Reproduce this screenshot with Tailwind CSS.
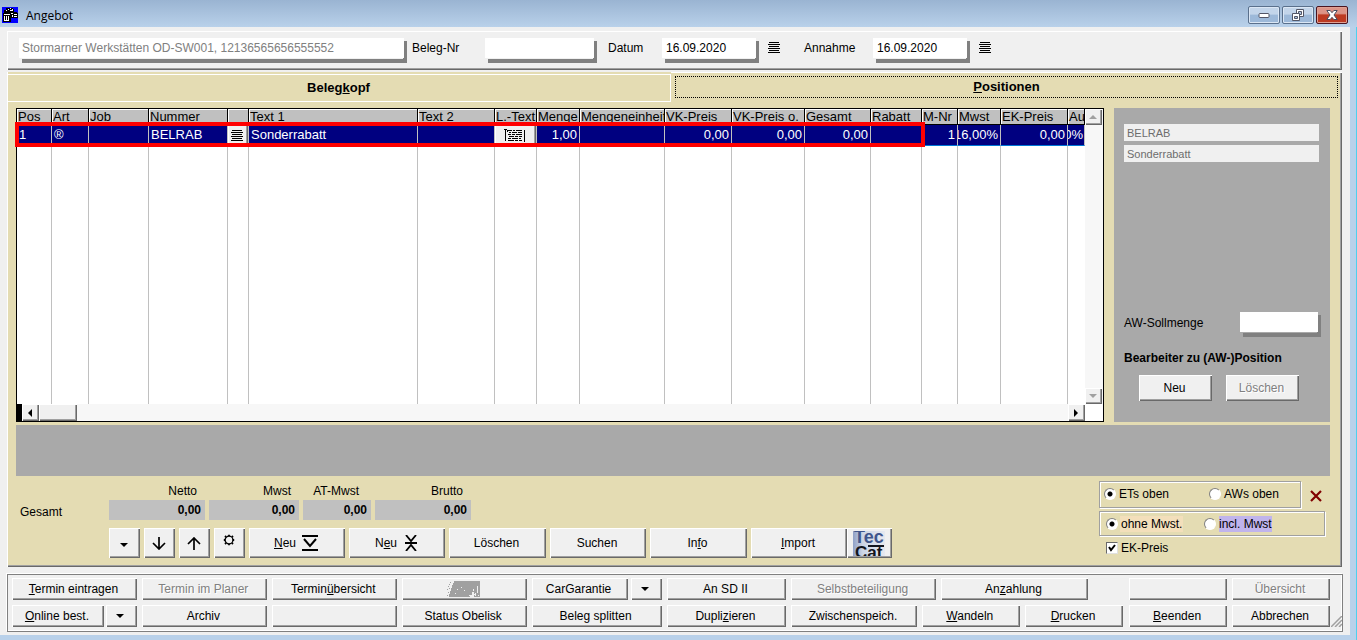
<!DOCTYPE html>
<html lang="de">
<head>
<meta charset="utf-8">
<title>Angebot</title>
<script src="https://cdn.jsdelivr.net/npm/@tailwindcss/browser@4"></script>
</head>
<body class="h-screen min-h-[600px] flex flex-col bg-[#f0f0f0] text-black text-[12px] leading-4 font-['Liberation_Sans',Arial,sans-serif] overflow-hidden [&_button]:flex [&_button]:items-center [&_button]:justify-center [&_button]:whitespace-nowrap [&_button]:min-w-0 [&_main_button]:bg-[#f0f0f0] [&_main_button]:shadow-[inset_1px_1px_0_#fff,inset_-1px_-1px_0_#696969,inset_-2px_-2px_0_#a0a0a0] [&_main_button]:pr-[2px] [&_button:disabled]:text-[#808080] [&_button:disabled]:[text-shadow:1px_1px_0_#fff]">

<header class="h-[27px] shrink-0 flex items-center pl-[2px] pr-[9px] bg-linear-to-b from-[#9ab4d2] to-[#b9d1ea]">
  <svg class="w-4 h-4 mt-[3px]" viewBox="0 0 16 16" shape-rendering="crispEdges"><path fill="#00f" d="M0 0h16v16H0z"/><path fill="#000" d="M4 1h7v1h1v3h3v1h1v5H9v4H1V6h1V3h2z"/><path fill="#fff" d="M4 3h1v1H4zM6 2h1v1H6zM8 1h1v1H8zM10 2h1v1h-1zM8 3h3v1H8zM2 7h6v1H2zM2 9h1v4H2zM4 9h1v4H4zM6 9h1v4H6zM2 13h5v1H2zM9 6h2v1H9zM10 8h1v2h-1zM12 7h3v1h-3zM12 9h3v1h-3z"/></svg>
  <h1 class="ml-2 mt-[5px] flex-1 font-['Open_Sans','Noto_Sans',sans-serif] text-[12px] leading-4">Angebot</h1>
  <div class="flex gap-[2px] mt-[2px]">
    <button aria-label="Minimieren" class="w-8 h-[18px] rounded-[2px] border border-[#5a708c] bg-linear-to-b from-[#c3d5ea] from-45% to-[#9db9d9] to-50% shadow-[inset_0_0_0_1px_#dbe7f5]"><svg class="w-3 h-3" viewBox="0 0 12 12"><rect x="1" y="4.500" width="10" height="4" rx="1" fill="#fff" stroke="#535666"/></svg></button>
    <button aria-label="Wiederherstellen" class="w-8 h-[18px] rounded-[2px] border border-[#5a708c] bg-linear-to-b from-[#c3d5ea] from-45% to-[#9db9d9] to-50% shadow-[inset_0_0_0_1px_#dbe7f5]"><svg class="w-3 h-3" viewBox="0 0 12 12" fill="#fff" stroke="#535666"><path d="M4.500.5h7v7h-7z"/><path fill="#a9c2df" d="M6.500 2.500h3v3h-3z"/><path d="M.5 4.500h7v7h-7z"/><path fill="#a9c2df" d="M2.500 7.500h3v2h-3z"/></svg></button>
    <button aria-label="Schließen" class="w-8 h-[18px] rounded-[2px] border border-[#4a1420] bg-linear-to-b from-[#dc9488] from-40% to-[#bc3a22] to-50% shadow-[inset_0_0_0_1px_#e0a193]"><svg class="w-3 h-3" viewBox="0 0 12 12"><path fill="#fff" stroke="#4b4e60" d="M.8 1.500h3.400L6 3.700l1.800-2.200h3.400L8 6l3.200 4.500H7.800L6 8.300l-1.800 2.200H.8L4 6z"/></svg></button>
  </div>
</header>

<div class="flex-1 min-h-0 flex border-r border-[#4fd0ee]">
<main class="flex-1 min-w-0 flex flex-col pl-[7px] pr-2 pt-1 pb-[3px] border-r-[6px] border-b-[5px] border-[#b9d1ea]">

  <section class="h-[39px] shrink-0 flex items-start pt-[6px] pl-[11px] border-t border-l border-t-white border-l-white shadow-[inset_-1px_-1px_0_#696969,inset_-2px_-2px_0_#a0a0a0]">
    <input aria-label="Kunde" disabled value="Stormarner Werkstätten OD-SW001, 12136565656555552" class="w-[385px] h-[22px] px-[3px] bg-white bg-clip-padding border-b-2 border-transparent text-[#808080] shadow-[3px_3px_0_#808080]">
    <label for="beleg" class="ml-2 mt-[2px] w-[73px]">Beleg-Nr</label>
    <input id="beleg" class="w-[109px] h-[22px] px-[3px] bg-white bg-clip-padding border-b-2 border-transparent shadow-[3px_3px_0_#808080]">
    <label for="datum" class="ml-[14px] mt-[2px] w-[54px]">Datum</label>
    <input id="datum" value="16.09.2020" class="w-[94px] h-[22px] px-1 bg-white bg-clip-padding border-b-2 border-transparent shadow-[3px_3px_0_#808080]">
    <svg class="ml-3 mt-1 w-3 h-[11px]" viewBox="0 0 12 11" shape-rendering="crispEdges"><path d="M1 0h10v1H1zM0 2h12v1H0zM1 4h10v1H1zM0 6h12v1H0zM1 8h10v1H1zM0 10h12v1H0z"/></svg>
    <label for="annahme" class="ml-6 mt-[2px] w-[69px]">Annahme</label>
    <input id="annahme" value="16.09.2020" class="w-[94px] h-[22px] px-1 bg-white bg-clip-padding border-b-2 border-transparent shadow-[3px_3px_0_#808080]">
    <svg class="ml-3 mt-1 w-3 h-[11px]" viewBox="0 0 12 11" shape-rendering="crispEdges"><path d="M1 0h10v1H1zM0 2h12v1H0zM1 4h10v1H1zM0 6h12v1H0zM1 8h10v1H1zM0 10h12v1H0z"/></svg>
  </section>

  <section class="mt-[2px] flex-1 min-h-0 flex flex-col bg-[#e4dcb3] shadow-[inset_1px_0_0_#fff,inset_-1px_-1px_0_#696969,inset_-2px_-2px_0_#a0a0a0]">
    <nav class="flex h-[30px] shrink-0 text-[13px] font-bold">
      <a href="#belegkopf" class="flex-1 mt-[2px] flex items-center justify-center border-y border-r border-white">Beleg<u>k</u>opf</a>
      <a href="#positionen" class="flex-1 pl-1 pr-1 pt-[3px] pb-1 border-t border-white flex"><span class="flex-1 flex items-center justify-center border border-dotted border-black"><u>P</u>ositionen</span></a>
    </nav>

    <div class="flex-1 min-h-0 flex flex-col pt-[6px] pl-[9px] pr-3">
      <div class="flex-1 min-h-0 flex gap-[10px]">
        <div class="relative flex-1 min-w-0 flex flex-col border border-black bg-white">
          <div class="flex-1 min-h-0 flex">
            <div class="flex-1 min-w-0 h-full overflow-hidden">
              <table class="table-fixed w-full h-full border-separate border-spacing-0 text-[13px] [&_th]:h-4 [&_th]:p-0 [&_th]:pl-[1px] [&_th]:text-left [&_th]:font-normal [&_th]:whitespace-nowrap [&_th]:overflow-hidden [&_th]:bg-[#c0c0c0] [&_th]:border-r [&_th]:border-b [&_th]:border-black [&_th]:shadow-[inset_1px_1px_0_#fff] [&_th]:leading-[15px] [&_td]:p-0 [&_td]:border-r [&_td]:border-[#c0c0c0] [&_td]:overflow-hidden [&_td]:whitespace-nowrap">
                <colgroup><col class="w-[35px]"><col class="w-[37px]"><col class="w-[60px]"><col class="w-[79px]"><col class="w-[21px]"><col><col class="w-[77px]"><col class="w-[42px]"><col class="w-[43px]"><col class="w-[85px]"><col class="w-[67px]"><col class="w-[73px]"><col class="w-[66px]"><col class="w-[51px]"><col class="w-[36px]"><col class="w-[43px]"><col class="w-[67px]"><col class="w-[17px]"></colgroup>
                <thead><tr><th>Pos</th><th>Art</th><th>Job</th><th>Nummer</th><th></th><th>Text 1</th><th>Text 2</th><th>L.-Text</th><th>Menge</th><th>Mengeneinheit</th><th>VK-Preis</th><th>VK-Preis o.</th><th>Gesamt</th><th>Rabatt</th><th>M-Nr</th><th>Mwst</th><th>EK-Preis</th><th>Au</th></tr></thead>
                <tbody>
                  <tr class="bg-[#000080] text-white [&>td]:h-[21px] [&>td]:border-b [&>td]:border-b-[#0078d7]">
                    <td class="pl-[2px]!">1</td><td class="pl-[2px]!">®</td><td></td><td class="pl-[2px]!">BELRAB</td>
                    <td><button aria-label="Nummer wählen" class="w-full h-5"><svg class="w-3 h-[11px]" viewBox="0 0 12 11" shape-rendering="crispEdges"><path d="M1 0h10v1H1zM0 2h12v1H0zM1 4h10v1H1zM0 6h12v1H0zM1 8h10v1H1zM0 10h12v1H0z"/></svg></button></td>
                    <td class="pl-[2px]!">Sonderrabatt</td><td></td>
                    <td><button aria-label="Langtext" class="w-full h-5"><svg class="w-[22px] h-[14px]" viewBox="0 0 22 14" shape-rendering="crispEdges"><path d="M0 1h3v1H0zM1 2h1v11H1zM3 2h1v2H3zM20 2h1v12h-1zM4 2h4v1H4zM9 2h2v1H9zM12 2h6v1h-6zM5 4h2v1H5zM8 4h5v1H8zM14 4h4v1h-4zM4 6h3v1H4zM8 6h3v1H8zM12 6h6v1h-6zM5 8h5v1H5zM11 8h3v1h-3zM15 8h3v1h-3zM4 10h3v1H4zM8 10h6v1H8zM15 10h2v1h-2zM4 12h6v1H4zM11 12h3v1h-3zM15 12h3v1h-3z"/></svg></button></td>
                    <td class="pr-[2px]! text-right">1,00</td><td></td><td class="pr-[2px]! text-right">0,00</td><td class="pr-[2px]! text-right">0,00</td><td class="pr-[2px]! text-right">0,00</td><td></td><td class="pr-[2px]! text-right">1</td>
                    <td><div class="flex justify-end overflow-hidden pr-[2px]">16,00%</div></td><td class="pr-[2px]! text-right">0,00</td><td><div class="flex justify-end overflow-hidden pr-[1px]">0,00%</div></td>
                  </tr>
                  <tr class="h-full"><td></td><td></td><td></td><td></td><td></td><td></td><td></td><td></td><td></td><td></td><td></td><td></td><td></td><td></td><td></td><td></td><td></td><td class="border-r-0!"></td></tr>
                </tbody>
              </table>
            </div>
            <div class="w-[18px] shrink-0 flex flex-col justify-between bg-[#f7f7f7]">
              <button disabled aria-label="Nach oben" class="w-[17px] h-4"><svg class="w-2 h-1" viewBox="0 0 8 4"><path fill="#a0a0a0" d="M0 4l4-4 4 4z"/></svg></button>
              <button disabled aria-label="Nach unten" class="w-[17px] h-4"><svg class="w-2 h-1" viewBox="0 0 8 4"><path fill="#a0a0a0" d="M0 0l4 4 4-4z"/></svg></button>
            </div>
          </div>
          <div class="h-[17px] shrink-0 flex bg-[#f7f7f7]">
            <div class="w-[5px] bg-black"></div>
            <button aria-label="Nach links" class="w-[17px]"><svg class="w-1 h-2" viewBox="0 0 4 8"><path d="M4 0v8L0 4z"/></svg></button>
            <button aria-label="Bildlauf" class="w-[38px]"></button>
            <div class="flex-1"></div>
            <button aria-label="Nach rechts" class="w-[17px]"><svg class="w-1 h-2" viewBox="0 0 4 8"><path d="M0 0v8l4-4z"/></svg></button>
            <div class="w-[18px] bg-white"></div>
          </div>
          <div class="absolute -left-[2px] right-[178px] top-[13px] h-[25px] border-4 border-[#f00] pointer-events-none"></div>
        </div>

        <aside class="w-[216px] shrink-0 flex flex-col bg-[#a9a9a9] pt-4 pl-[10px] pr-[11px] pb-[21px]">
          <input aria-label="Nummer" disabled value="BELRAB" class="h-[17px] px-[3px] bg-[#f0f0f0] text-[11px] text-[#6d6d6d]">
          <input aria-label="Text" disabled value="Sonderrabatt" class="mt-1 h-[17px] px-[3px] bg-[#f0f0f0] text-[11px] text-[#6d6d6d]">
          <div class="flex-1"></div>
          <div class="flex justify-between items-center"><label for="soll">AW-Sollmenge</label><input id="soll" class="w-[78px] h-[22px] mr-[1px] px-[3px] bg-white bg-clip-padding border-b-2 border-transparent shadow-[3px_3px_0_#808080]"></div>
          <h2 class="mt-4 font-bold">Bearbeiter zu (AW-)Position</h2>
          <div class="mt-[9px] flex gap-[14px] pl-[15px] pr-5"><button class="flex-1 h-[26px]">Neu</button><button disabled class="flex-1 h-[26px]">Löschen</button></div>
        </aside>
      </div>

      <div class="mt-[3px] h-[51px] shrink-0 bg-[#a9a9a9]"></div>

      <div class="h-[91px] shrink-0 flex justify-between">
        <div class="flex">
          <div class="w-[93px] pl-1 pt-7">Gesamt</div>
          <div>
            <dl class="mt-[7px] flex gap-1 text-right [&_dt]:pr-2 [&_dd]:mt-[1px] [&_dd]:h-5 [&_dd]:leading-5 [&_dd]:pr-1 [&_dd]:bg-[#c0c0c0] [&_dd]:font-bold">
              <div class="w-24"><dt>Netto</dt><dd>0,00</dd></div>
              <div class="w-[90px]"><dt>Mwst</dt><dd>0,00</dd></div>
              <div class="w-[68px]"><dt class="pr-3!">AT-Mwst</dt><dd>0,00</dd></div>
              <div class="w-24"><dt>Brutto</dt><dd>0,00</dd></div>
            </dl>
            <div class="mt-2 flex gap-1 [&>button]:h-[30px]">
              <button aria-label="Mehr" class="w-[31px]"><svg class="w-2 h-1 mt-1" viewBox="0 0 8 4"><path d="M0 0h8L4 4z"/></svg></button>
              <button aria-label="Nach unten verschieben" class="w-[31px]"><svg class="w-[14px] h-[13px]" viewBox="0 0 14 13" fill="none" stroke="#000" stroke-width="1.700"><path d="M7 0v12M1 6l6 6 6-6"/></svg></button>
              <button aria-label="Nach oben verschieben" class="w-[31px]"><svg class="w-[14px] h-[13px]" viewBox="0 0 14 13" fill="none" stroke="#000" stroke-width="1.700"><path d="M7 13V1M1 7l6-6 6 6"/></svg></button>
              <button aria-label="Einstellungen" class="w-[31px]"><svg class="w-3 h-3 mb-[6px]" viewBox="0 0 12 12" fill="none" stroke="#000"><circle cx="6" cy="6" r="3.900" stroke-width="1.300"/><path stroke-width="1.800" d="M6 .8v1.400M6 9.800v1.400M.8 6h1.400M9.800 6h1.400M2 2l1 1M9 9l1 1M10 2L9 3M2 10l1-1"/></svg></button>
              <button class="w-24 gap-[6px]"><span><u>N</u>eu</span><svg class="w-4 h-4" viewBox="0 0 16 16" fill="none" stroke="#000" stroke-width="2"><path d="M0 1h16M0 15h16M2 4l6 7 6-7"/></svg></button>
              <button class="w-24 gap-2"><span>N<u>e</u>u</span><svg class="w-3 h-4" viewBox="0 0 12 16" fill="none" stroke="#000" stroke-width="1.800"><path d="M0 8h12M1 0l5 6 5-6M1 16l5-6 5 6"/></svg></button>
              <button class="w-[97px]">Löschen</button>
              <button class="w-24">Suchen</button>
              <button class="w-[97px]">In<u>f</u>o</button>
              <div class="flex [&>button]:h-[30px]">
                <button class="w-24"><u>I</u>mport</button>
                <button aria-label="TecCat" class="w-[45px]"><svg class="w-8 h-[25px]" viewBox="0 0 32 25" overflow="hidden"><defs><linearGradient id="tc"><stop offset="0" stop-color="#8fa0c6"/><stop offset=".3" stop-color="#cdd5e5"/><stop offset="1" stop-color="#e6e9f0"/></linearGradient></defs><path fill="url(#tc)" d="M0 0h32v25H0z"/><g font-family="Liberation Sans" font-weight="bold"><text x="1" y="12" font-size="18" fill="#40568c">Tec</text><text x="2" y="27" font-size="17" fill="#14161e">Cat</text></g><path fill="none" stroke="#14161e" stroke-width="2" d="M15 15h16"/></svg></button>
              </div>
            </div>
          </div>
        </div>

        <div class="w-[231px] pt-[5px]">
          <div class="flex items-center gap-[9px]">
            <fieldset class="w-[202px] h-[27px] flex items-center pl-1 pb-[2px] border border-[#a0a0a0] shadow-[1px_1px_0_#fff,inset_1px_1px_0_#fff]">
              <label class="w-[105px] flex items-center gap-[3px]"><input type="radio" name="oben" checked class="appearance-none w-3 h-3 rounded-full border border-[#808080] border-r-white border-b-white bg-white checked:bg-[radial-gradient(circle,#000_2px,#fff_3px)]">ETs oben</label>
              <label class="flex items-center gap-[3px]"><input type="radio" name="oben" class="appearance-none w-3 h-3 rounded-full border border-[#808080] border-r-white border-b-white bg-white checked:bg-[radial-gradient(circle,#000_2px,#fff_3px)]">AWs oben</label>
            </fieldset>
            <a href="#entfernen" aria-label="Entfernen"><svg class="w-3 h-3 mt-[2px]" viewBox="0 0 12 12" stroke="#800000" stroke-width="2.200"><path d="M1 1l10 10M11 1L1 11"/></svg></a>
          </div>
          <fieldset class="mt-[3px] w-[226px] h-[25px] flex items-center pl-[6px] border border-[#a0a0a0] shadow-[1px_1px_0_#fff,inset_1px_1px_0_#fff]">
            <label class="w-[98px] flex items-center gap-[2px]"><input type="radio" name="mwst" checked class="appearance-none w-3 h-3 rounded-full border border-[#808080] border-r-white border-b-white bg-white checked:bg-[radial-gradient(circle,#000_2px,#fff_3px)]"><span class="px-[1px] bg-[#f3dfbb]">ohne Mwst.</span></label>
            <label class="flex items-center gap-[3px]"><input type="radio" name="mwst" class="appearance-none w-3 h-3 rounded-full border border-[#808080] border-r-white border-b-white bg-white checked:bg-[radial-gradient(circle,#000_2px,#fff_3px)]"><span class="bg-[#c0b4ec]">incl. Mwst</span></label>
          </fieldset>
          <label class="mt-1 ml-[7px] flex items-center gap-[3px]"><span class="relative flex"><input type="checkbox" checked class="appearance-none w-3 h-3 bg-white border border-[#696969] border-r-[#e0e0e0] border-b-[#e0e0e0]"><svg class="absolute inset-0 w-3 h-3" viewBox="0 0 12 12" fill="none" stroke="#000" stroke-width="2"><path d="M3 5l2 3 4-5"/></svg></span>EK-Preis</label>
        </div>
      </div>
    </div>
  </section>

  <footer class="relative mt-[7px] h-[58px] shrink-0 flex flex-col gap-[5px] pt-[3px] pl-1 pr-3 -mr-[1px] border border-[#808080] shadow-[-1px_-1px_0_#fff,inset_-1px_-1px_0_#fff] [&_button]:h-[22px]">
    <div class="grid grid-cols-[125fr_125fr_125fr_125fr_130fr_120fr_333fr_98fr_98fr] gap-[5px]">
      <button><span><u>T</u>ermin eintragen</span></button>
      <button disabled>Termin im Planer</button>
      <button><span>Termin<u>ü</u>bersicht</span></button>
      <button disabled aria-label="Teilekatalog"><svg class="w-[33px] h-4" viewBox="0 0 33 16" shape-rendering="crispEdges"><path fill="#a0a0a0" d="M7 0h26v16H2v-3h1v-3h1V7h1V4h1V2h1zM2 3h1v1H2zM1 5h1v1H1zM3 1h1v1H3zM0 8h1v1H0zM2 7h1v1H2zM1 11h1v1H1zM0 14h1v1H0z"/><path fill="#f0f0f0" d="M10 8h1v1h-1zM14 6h1v1h-1zM17 9h1v1h-1zM8 12h1v1H8zM26 8h1v3h-2v3h-2v2h4v-2h1zM30 5h1v7h-1zM28 12h1v3h-1zM31 14h1v1h-1zM22 14h1v1h-1z"/></svg></button>
      <div class="flex gap-[3px]"><button class="flex-1">CarGarantie</button><button aria-label="CarGarantie Auswahl" class="w-[31px]"><svg class="w-2 h-1" viewBox="0 0 8 4"><path d="M0 0h8L4 4z"/></svg></button></div>
      <button>An SD II</button>
      <div class="flex gap-[5px] pr-9"><button disabled class="grow basis-[144px]">Selbstbeteiligung</button><button class="grow basis-[147px]"><span>An<u>z</u>ahlung</span></button></div>
      <button aria-label="Frei"></button>
      <button disabled>Übersicht</button>
    </div>
    <div class="grid grid-cols-[125fr_125fr_125fr_125fr_130fr_120fr_333fr_98fr_98fr] gap-[5px]">
      <div class="flex gap-[2px]"><button class="flex-1"><span><u>O</u>nline best.</span></button><button aria-label="Online best. Auswahl" class="w-[31px]"><svg class="w-2 h-1" viewBox="0 0 8 4"><path d="M0 0h8L4 4z"/></svg></button></div>
      <button>Archiv</button>
      <button aria-label="Frei"></button>
      <button>Status Obelisk</button>
      <button>Beleg splitten</button>
      <button><span>Dupli<u>z</u>ieren</span></button>
      <div class="flex gap-[5px] pr-[1px]"><button class="grow basis-[125px]">Zwischenspeich.</button><button class="grow basis-[98px]"><span><u>W</u>andeln</span></button><button class="grow basis-[98px]"><span><u>D</u>rucken</span></button></div>
      <button><span><u>B</u>eenden</span></button>
      <button>Abbrechen</button>
    </div>
    <svg class="absolute right-0 bottom-1 w-[11px] h-[11px]" viewBox="0 0 11 11" fill="none" stroke="#a0a0a0" stroke-width="1.500"><path d="M0 11L11 0M4 11l7-7M8 11l3-3"/></svg>
  </footer>
</main>
</div>
</body>
</html>
